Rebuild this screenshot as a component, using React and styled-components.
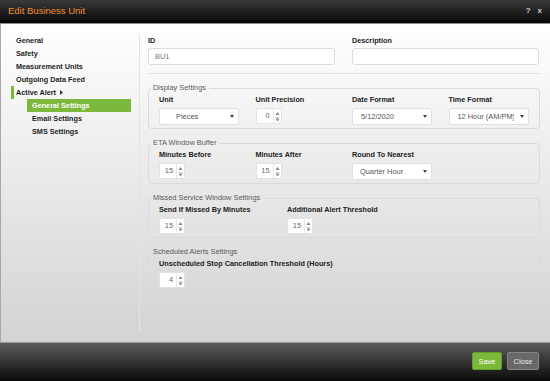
import React from 'react';
import styled, { createGlobalStyle } from 'styled-components';

const GlobalStyle = createGlobalStyle`
  body {
    margin: 0;
    font-family: 'Liberation Sans', Arial, sans-serif;
  }
  * {
    box-sizing: border-box;
  }
`;

const Dialog = styled.div`
  width: 550px;
  height: 381px;
  display: flex;
  flex-direction: column;
  overflow: hidden;
`;

const Header = styled.div`
  flex: none;
  height: 24px;
  display: flex;
  align-items: center;
  justify-content: space-between;
  padding: 0 8px 0 8px;
  background: linear-gradient(#3a3a3a, #060606);
  border-bottom: 1px solid #8e8e8e;
`;

const Title = styled.span`
  color: #f08c28;
  font-size: 9.5px;
  margin-top: -2px;
`;

const HeaderTools = styled.div`
  display: flex;
  gap: 7px;
  color: #cfcfcf;
  font-size: 8px;
  font-weight: bold;
  margin-top: -3px;
`;

const Body = styled.div`
  flex: 1;
  display: flex;
  padding: 10px 10px 10px 0;
  background: linear-gradient(#ffffff, #d2d3d2);
  border-left: 1px solid #a8a8a8;
`;

const Nav = styled.div`
  width: 139px;
  flex: none;
  border-right: 1px solid #e3e3e3;
`;

const NavItem = styled.div`
  height: 13px;
  line-height: 13px;
  padding-left: 15px;
  font-size: 7.25px;
  font-weight: bold;
  color: #1e1e1e;
`;

const NavParent = styled(NavItem)`
  display: flex;
  align-items: center;
  gap: 4px;
  margin-left: 10px;
  padding-left: 2px;
  border-left: 3px solid #7cb83b;
`;

const SubItem = styled.div`
  height: 13px;
  line-height: 13px;
  width: 104px;
  margin-left: 26px;
  padding-left: 5px;
  font-size: 7.25px;
  font-weight: bold;
  color: ${(props) => (props.active ? '#ffffff' : '#1e1e1e')};
  background: ${(props) => (props.active ? '#7cb83b' : 'transparent')};
`;

const Content = styled.div`
  width: 392px;
  margin-left: 8px;
`;

const TopRow = styled.div`
  display: grid;
  grid-template-columns: 187px 187px;
  column-gap: 17px;
`;

const Label = styled.div`
  height: ${(props) => props.h || 14}px;
  line-height: ${(props) => props.h || 14}px;
  font-size: 7.25px;
  font-weight: bold;
  color: #222;
  white-space: nowrap;
`;

const TextInput = styled.input`
  display: block;
  width: 100%;
  height: 17px;
  margin-top: 1px;
  padding: 0 6px;
  border: 1px solid #dcdcdc;
  border-radius: 3px;
  background: #fff;
  font-family: inherit;
  font-size: 7.4px;
  color: #777;
  outline: none;
`;

const Separator = styled.div`
  height: 1px;
  margin-top: 8px;
  background: #e3e3e3;
`;

const Group = styled.fieldset`
  margin: 9px 0 0 0;
  min-width: 0;
  padding: 0 10px 3px 10px;
  border: 1px solid #dadada;
  border-radius: 4px;
`;

const Legend = styled.legend`
  margin-left: -8px;
  padding: 0 3px 0 2px;
  font-size: 7.4px;
  line-height: 10px;
  color: #5a5a5a;
`;

const Row = styled.div`
  display: grid;
  grid-template-columns: repeat(${(props) => props.cols}, 1fr);
  margin-right: ${(props) => (props.cols === 3 ? -14 : -16)}px;
`;

const Control = styled.div`
  margin-top: 1px;
`;

const SelectBox = styled.div`
  display: flex;
  align-items: center;
  width: 80px;
  height: 17px;
  padding: 0 4px 0 ${(props) => props.indent}px;
  border: 1px solid #e0e0e0;
  border-radius: 2px;
  background: #fff;
  font-size: 7.4px;
  color: #555;
`;

const SelectValue = styled.span`
  flex: 1;
  min-width: 0;
  overflow: hidden;
  white-space: nowrap;
  margin-right: 6px;
`;

const SpinBox = styled.div`
  display: flex;
  width: 26px;
  height: 16px;
  border: 1px solid #e2e2e2;
  background: #fff;
`;

const SpinValue = styled.div`
  flex: 1;
  padding-right: 3px;
  text-align: right;
  font-size: 7.4px;
  line-height: 14px;
  color: #666;
`;

const SpinArrows = styled.div`
  width: 8px;
  border-left: 1px solid #e6e6e6;
  display: flex;
  align-items: center;
  justify-content: center;
`;

const Footer = styled.div`
  flex: none;
  height: 39px;
  display: flex;
  justify-content: flex-end;
  align-items: flex-start;
  gap: 5px;
  padding: 9px 11px 0 0;
  background: linear-gradient(#5b5b5b, #0a0a0a);
  border-top: 1px solid #9a9a9a;
`;

const Button = styled.button`
  width: ${(props) => props.w}px;
  height: 18px;
  padding: 0;
  border-radius: 2px;
  font-family: inherit;
  font-size: 7.4px;
  border: 1px solid ${(props) => (props.primary ? '#629d2b' : '#858585')};
  background: ${(props) => (props.primary ? '#7cb83b' : '#696969')};
  color: ${(props) => (props.primary ? '#ffffff' : '#e6e6e6')};
`;

const Select = ({ value, indent = 8 }) => (
  <SelectBox indent={indent}>
    <SelectValue>{value}</SelectValue>
    <svg width="4" height="3" viewBox="0 0 4 3">
      <polygon points="0,0 4,0 2,3" fill="#444" />
    </svg>
  </SelectBox>
);

const Spinner = ({ value }) => (
  <SpinBox>
    <SpinValue>{value}</SpinValue>
    <SpinArrows>
      <svg width="5" height="11" viewBox="0 0 5 11">
        <polygon points="0.5,4 4.5,4 2.5,1" fill="#888" />
        <line x1="0.5" y1="6.5" x2="4.5" y2="6.5" stroke="#bbb" strokeWidth="0.6" />
        <polygon points="0.5,7.5 4.5,7.5 2.5,10.5" fill="#888" />
      </svg>
    </SpinArrows>
  </SpinBox>
);

const Field = ({ label, children }) => (
  <div>
    <Label>{label}</Label>
    <Control>{children}</Control>
  </div>
);

const navItems = ['General', 'Safety', 'Measurement Units', 'Outgoing Data Feed'];
const subItems = ['General Settings', 'Email Settings', 'SMS Settings'];

const App = () => (
  <>
    <GlobalStyle />
    <Dialog>
      <Header>
        <Title>Edit Business Unit</Title>
        <HeaderTools>
          <span>?</span>
          <span>x</span>
        </HeaderTools>
      </Header>
      <Body>
        <Nav>
          {navItems.map((item) => (
            <NavItem key={item}>{item}</NavItem>
          ))}
          <NavParent>
            Active Alert
            <svg width="3" height="5" viewBox="0 0 3 5">
              <polygon points="0,0 3,2.5 0,5" fill="#333" />
            </svg>
          </NavParent>
          {subItems.map((item, index) => (
            <SubItem key={item} active={index === 0}>
              {item}
            </SubItem>
          ))}
        </Nav>
        <Content>
          <TopRow>
            <div>
              <Label h={13}>ID</Label>
              <TextInput readOnly value="BU1" />
            </div>
            <div>
              <Label h={13}>Description</Label>
              <TextInput readOnly value="" />
            </div>
          </TopRow>
          <Separator />

          <Group>
            <Legend>Display Settings</Legend>
            <Row cols={4}>
              <Field label="Unit">
                <Select value="Pieces" indent={16} />
              </Field>
              <Field label="Unit Precision">
                <Spinner value="0" />
              </Field>
              <Field label="Date Format">
                <Select value="5/12/2020" />
              </Field>
              <Field label="Time Format">
                <Select value="12 Hour (AM/PM)" />
              </Field>
            </Row>
          </Group>

          <Group>
            <Legend>ETA Window Buffer</Legend>
            <Row cols={4}>
              <Field label="Minutes Before">
                <Spinner value="15" />
              </Field>
              <Field label="Minutes After">
                <Spinner value="15" />
              </Field>
              <Field label="Round To Nearest">
                <Select value="Quarter Hour" indent={7} />
              </Field>
            </Row>
          </Group>

          <Group>
            <Legend>Missed Service Window Settings</Legend>
            <Row cols={3}>
              <Field label="Send If Missed By Minutes">
                <Spinner value="15" />
              </Field>
              <Field label="Additional Alert Threshold">
                <Spinner value="15" />
              </Field>
            </Row>
          </Group>

          <Group>
            <Legend>Scheduled Alerts Settings</Legend>
            <Row cols={1}>
              <Field label="Unscheduled Stop Cancellation Threshold (Hours)">
                <Spinner value="4" />
              </Field>
            </Row>
          </Group>
        </Content>
      </Body>
      <Footer>
        <Button primary w={30}>Save</Button>
        <Button w={32}>Close</Button>
      </Footer>
    </Dialog>
  </>
);

export default App;
